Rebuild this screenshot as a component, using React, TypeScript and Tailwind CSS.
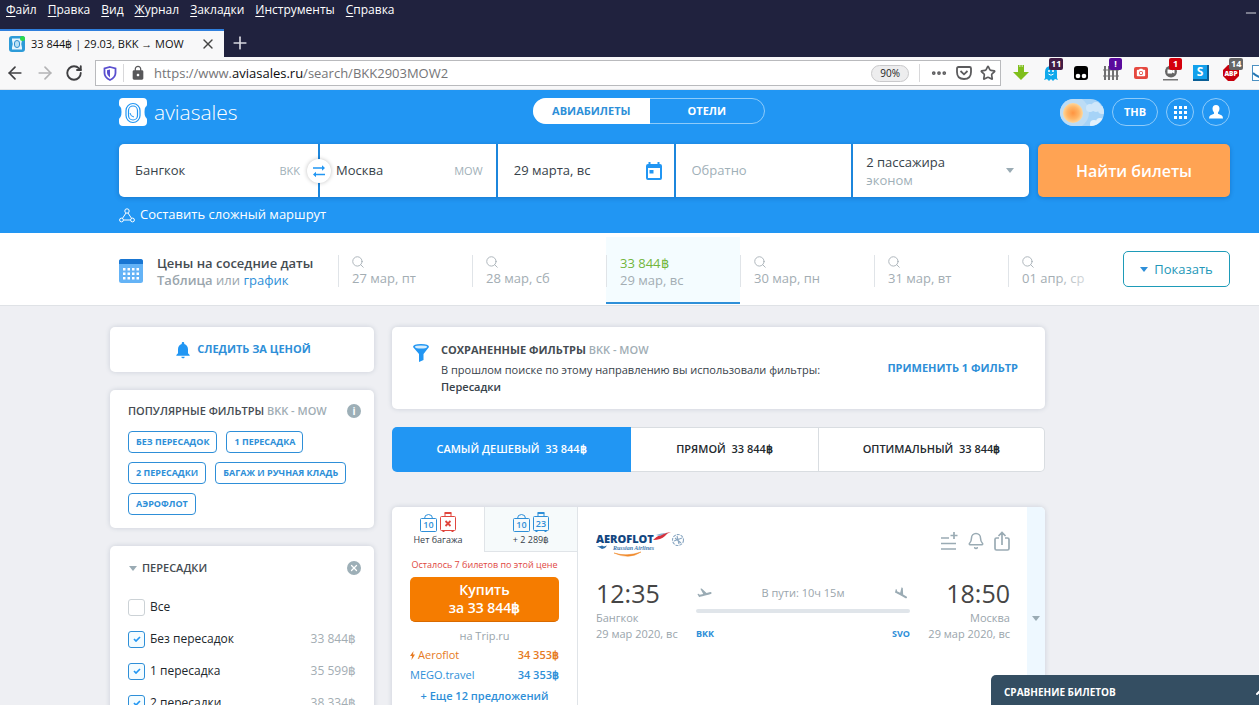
import React, { useState } from "react";
import clsx from "clsx";
import {
  ArrowLeft,
  ArrowRight,
  Bell,
  ChevronUp,
  Ellipsis,
  Minus,
  Plus,
  RotateCw,
  Search,
  Star,
  X,
} from "lucide-react";
import { MdCameraAlt, MdLock, MdNotifications } from "react-icons/md";

// DATA
const menuItems = ["Файл", "Правка", "Вид", "Журнал", "Закладки", "Инструменты", "Справка"];

const nearDates = [
  { label: "27 мар, пт" },
  { label: "28 мар, сб" },
  { label: "29 мар, вс", price: "33 844฿" },
  { label: "30 мар, пн" },
  { label: "31 мар, вт" },
  { label: "01 апр, ср" },
];

const popularFilters = [
  "БЕЗ ПЕРЕСАДОК",
  "1 ПЕРЕСАДКА",
  "2 ПЕРЕСАДКИ",
  "БАГАЖ И РУЧНАЯ КЛАДЬ",
  "АЭРОФЛОТ",
];

const stopOptions = [
  { id: "all", label: "Все", price: "", on: false },
  { id: "direct", label: "Без пересадок", price: "33 844฿", on: true },
  { id: "one", label: "1 пересадка", price: "35 599฿", on: true },
  { id: "two", label: "2 пересадки", price: "38 334฿", on: true },
];

const card = "bg-white rounded-[5px] shadow-[0_0_5px_rgba(60,80,110,0.2)]";

// ICONS
const Caret = ({ className }: { className?: string }) => (
  <svg viewBox="0 0 8 5" className={clsx("h-[5px] w-2 shrink-0 fill-current", className)}>
    <path d="M0 0h8L4 5z" />
  </svg>
);

const LogoMark = () => (
  <svg viewBox="0 0 28 28" className="size-7">
    <path
      fill="#fff"
      d="M4 0h20q4 0 4 4v2.500q0 1.500-1.500 2.500-1 1-1 5t1 5q1.500 1 1.500 2.500V24q0 4-4 4H4q-4 0-4-4v-2.500Q0 20 1.500 19q1-1 1-5t-1-5Q0 8 0 6.500V4q0-4 4-4z"
    />
    <rect x="7" y="5.500" width="14" height="19" rx="7" fill="none" stroke="#2196f3" strokeWidth="1.200" />
    <rect x="9.500" y="8" width="9" height="14" rx="4.500" fill="none" stroke="#2196f3" strokeWidth="1.200" />
    <path d="M11 15q.5 3.500 4 4" fill="none" stroke="#2196f3" />
  </svg>
);

const TabIcon = () => (
  <svg viewBox="0 0 16 16" className="size-4 shrink-0">
    <rect width="16" height="16" rx="3" fill="#2d9bd8" />
    <path d="M3 2.500h10v2q-1.500 3.500 0 7v2H3v-2q1.500-3.500 0-7z" fill="#e6f5fd" />
    <rect x="5.500" y="4.500" width="5" height="7" rx="2.500" fill="#b7e0f5" stroke="#2d8fd0" />
    <circle cx="13.500" cy="2.500" r="2.500" fill="#2bd94a" />
  </svg>
);

const Shield = () => (
  <svg viewBox="0 0 14 15" className="h-[15px] w-3.5 shrink-0">
    <path d="M7 1l5.500 1.500v4.500q0 4.500-5.500 7Q1.500 11.500 1.500 7V2.500z" fill="#fff" stroke="#5a4fcf" strokeWidth="1.800" />
    <path d="M7 3.500v8Q4 9.500 4 7V4.300z" fill="#5a4fcf" />
  </svg>
);

const Pocket = () => (
  <svg viewBox="0 0 16 16" className="size-4 shrink-0" fill="none" stroke="#5b5b5d" strokeWidth="1.800">
    <path d="M2.500 2h11q1.500 0 1.500 1.500V7q0 7-7 7T1 7V3.500Q1 2 2.500 2z" />
    <path d="M4.500 6L8 9.300 11.500 6" />
  </svg>
);

const Route = () => (
  <svg viewBox="0 0 16 15" className="h-[15px] w-4 shrink-0" fill="none" stroke="#fff">
    <circle cx="8" cy="3" r="2.200" />
    <circle cx="2.500" cy="12" r="1.900" />
    <circle cx="13.500" cy="12" r="1.900" />
    <path d="M7 5L3.500 10.300M9 5l3.500 5.300M4.500 12h7" />
  </svg>
);

const SwapArrows = () => (
  <svg viewBox="0 0 12 12" className="size-3" fill="none" stroke="#2196f3" strokeWidth="1.500">
    <path d="M0 3h10M12 9.500H2" />
    <path d="M9 .3L12 3 9 5.700zM3 6.800L0 9.500l3 2.700z" fill="#2196f3" stroke="none" />
  </svg>
);

const CalendarInput = () => (
  <svg viewBox="0 0 16 18" className="h-[18px] w-4 shrink-0">
    <path
      fill="#2196f3"
      fillRule="evenodd"
      d="M2.500 0h2v2h7V0h2v2h.5q2 0 2 2v12q0 2-2 2H2q-2 0-2-2V4q0-2 2-2h.5zM2 6v10h12V6z"
    />
    <path fill="#2196f3" d="M3.500 8h4v3.500h-4z" />
  </svg>
);

const CalendarTable = () => (
  <svg viewBox="0 0 24 24" className="size-6 shrink-0">
    <rect width="24" height="24" rx="2.500" fill="#64b3f6" />
    <path d="M0 5V2.500Q0 0 2.500 0h19Q24 0 24 2.500V5z" fill="#1976d2" />
    {[9, 13.500, 18].map((y) =>
      [4, 8.500, 13, 17.500].map((x) => (
        <rect key={`${x}-${y}`} x={x} y={y} width="2.500" height="2.500" fill="#fff" />
      ))
    )}
  </svg>
);

const Sun = () => (
  <svg viewBox="0 0 44 27" className="h-[27px] w-11">
    <defs>
      <radialGradient id="sun">
        <stop offset="0" stopColor="#ff9440" />
        <stop offset=".6" stopColor="#ffb566" />
        <stop offset="1" stopColor="#ffd79b" />
      </radialGradient>
      <clipPath id="sky">
        <rect width="44" height="27" rx="13.500" />
      </clipPath>
    </defs>
    <g clipPath="url(#sky)">
      <rect width="44" height="27" fill="#a6d3f7" />
      <circle cx="13" cy="13.500" r="16" fill="#bcdcf5" />
      <g fill="#cfe7fa">
        <circle cx="30" cy="9" r="4" />
        <circle cx="36" cy="8" r="5" />
        <circle cx="42" cy="11" r="4" />
        <circle cx="34" cy="25" r="4" fill="#e3f1fc" />
        <circle cx="40" cy="23" r="4" fill="#e3f1fc" />
      </g>
      <circle cx="13" cy="14" r="10" fill="url(#sun)" />
    </g>
  </svg>
);

const User = () => (
  <svg viewBox="0 0 14 14" className="size-3.5 fill-white">
    <path d="M7 0q3.500 0 3.500 3.800 0 2-1.500 3.700v1.300l3.500 1.500q1.500.7 1.500 3.200H0q0-2.500 1.500-3.200L5 8.800V7.500Q3.500 5.800 3.500 3.800 3.500 0 7 0z" />
  </svg>
);

const Grid9 = () => (
  <svg viewBox="0 0 13 13" className="size-[13px] fill-white">
    {[0, 5, 10].map((y) => [0, 5, 10].map((x) => <rect key={`${x}-${y}`} x={x} y={y} width="3" height="3" />))}
  </svg>
);

const Funnel = () => (
  <svg viewBox="0 0 16 18" className="h-[18px] w-4 shrink-0">
    <path d="M0 3q0-3 8-3t8 3L10.500 10v6L6 18v-8z" fill="#2196f3" />
    <ellipse cx="8" cy="3" rx="6.200" ry="1.600" fill="#d8eefd" />
  </svg>
);

const Bag = ({ value }: { value: string }) => (
  <svg viewBox="0 0 17 18" className="h-[18px] w-[17px]" fill="none" stroke="#2e8fd8">
    <path d="M1.500 4.500h14q1 0 1 1v11q0 1-1 1h-14q-1 0-1-1v-11q0-1 1-1zM4.500 4.500q0-4 4-4t4 4" />
    <text x="8.500" y="14" textAnchor="middle" fontSize="9" fontWeight="600" fill="#2e8fd8" stroke="none">
      {value}
    </text>
  </svg>
);

const Suitcase = ({ value }: { value?: string }) => (
  <svg viewBox="0 0 16 20" className="h-5 w-4" fill="none" stroke={value ? "#2e8fd8" : "#e0473f"}>
    <path d="M1.500 4.500h13q1 0 1 1v12q0 1-1 1h-13q-1 0-1-1v-12q0-1 1-1zM5 4.500v-3M11 4.500v-3" />
    <path d="M4.500 1h7M3.500 19v1M12.500 19v1" strokeWidth="2" />
    {value ? (
      <text x="8" y="15" textAnchor="middle" fontSize="9" fontWeight="600" fill="#2e8fd8" stroke="none">
        {value}
      </text>
    ) : (
      <path d="M5.500 9l5 5M10.500 9l-5 5" strokeWidth="1.800" />
    )}
  </svg>
);

const AeroflotLogo = () => (
  <svg viewBox="0 0 90 26" className="h-[26px] w-[90px]" role="img" aria-label="Aeroflot">
    <text x="0" y="12" fontSize="11" fontWeight="800" fill="#12467f">
      AEROFLOT
    </text>
    <text x="17" y="19" fontSize="6" fontStyle="italic" fontWeight="600" fill="#3f78ad" fontFamily="Liberation Serif, serif">
      Russian Airlines
    </text>
    <path d="M1 15q4 .5 5-.5l2 1 3-1-2 2.500-3 1z" fill="#2b6ca8" />
    <path d="M18 22q13 4 27-1-12 8-27 1z" fill="#f08a2c" stroke="#f08a2c" strokeWidth=".5" />
    <path d="M57 9q7-7 18-8-4 1-6 4-4 4-12 4z" fill="#d7303b" />
    <path d="M60 4q5-2 11-2-4 1-7 3z" fill="#8fb3d3" />
    <g fill="none" stroke="#8aa7c2" strokeWidth="1.100">
      <circle cx="82" cy="9" r="5.500" strokeDasharray="3 1" />
      <path d="M78 10l8-3M79 7l6 5M81 5l2 8" />
    </g>
  </svg>
);

const AddToList = () => (
  <svg viewBox="0 0 18 18" className="size-[18px]" fill="none" stroke="#9aabb4" strokeWidth="1.700">
    <path d="M1 6h8M1 11.500h15M1 17h15M14 0v7M10.500 3.500h7" />
  </svg>
);

const Share = () => (
  <svg viewBox="0 0 16 20" className="h-5 w-4" fill="none" stroke="#9aabb4" strokeWidth="1.700">
    <path d="M5 7H2.500Q1 7 1 8.500v9Q1 19 2.500 19h11q1.500 0 1.500-1.500v-9Q15 7 13.500 7H11M8 14V1.500M4.500 5L8 1.500 11.500 5" />
  </svg>
);

const PlaneUp = () => (
  <svg viewBox="0 0 24 20" className="h-3.5 w-[17px] fill-[#9aabb4]">
    <path d="M22.070 9.640c-.21-.8-1.040-1.280-1.840-1.060L14.920 10l-6.900-6.430-1.930.51 4.140 7.170-4.970 1.330-1.970-1.540-1.450.39 2.590 4.490s7.120-1.900 16.570-4.430c.81-.23 1.280-1.050 1.070-1.850z" />
  </svg>
);

const PlaneDown = () => (
  <svg viewBox="0 0 24 20" className="h-3.5 w-[17px] fill-[#9aabb4]">
    <path
      transform="rotate(14 12 10)"
      d="M9.680 13.270l4.350 1.160 5.310 1.420c.8.21 1.620-.26 1.840-1.060.21-.8-.26-1.620-1.060-1.840l-5.310-1.420-2.760-9.020L10.120 2v8.280L5.150 8.950l-.93-2.320-1.450-.39v5.170l1.600.43 5.310 1.430z"
    />
  </svg>
);

// BROWSER WINDOW
const Extension = ({ name, badge, badgeClass, children }: any) => (
  <button aria-label={name} className="relative flex size-[18px] shrink-0 items-center justify-center">
    {children}
    {badge && (
      <span
        className={clsx(
          "absolute -top-1.5 left-[7px] min-w-[13px] rounded-[2px] px-0.5 text-center text-[9px] leading-3 font-bold text-white",
          badgeClass
        )}
      >
        {badge}
      </span>
    )}
  </button>
);

const Extensions = () => (
  <div className="flex w-[258px] shrink-0 items-center gap-3 pl-[11px]">
    <Extension name="Загрузки">
      <svg viewBox="0 0 16 16" className="size-4">
        <path d="M5 2h6v5h5l-8 8-8-8h5z" fill="#80bf1c" />
        <path d="M5 0h1.500v3H5zM7.300 0h1.500v3H7.300zM9.500 0H11v3H9.500z" fill="#80bf1c" />
      </svg>
    </Extension>
    <Extension name="Ghostery" badge="11" badgeClass="bg-[#431c45]">
      <svg viewBox="0 0 14 16" className="h-4 w-3.5">
        <path d="M1 7q0-6 6-6t6 6v6l1 2-3-1-2 2-2-2-2 2-2-2-3 1 1-2z" fill="#0fa9ec" />
        <circle cx="5" cy="6" r="1" fill="#fff" />
        <circle cx="9" cy="6" r="1" fill="#fff" />
        <path d="M4.500 9Q7 11.500 9.500 9" fill="none" stroke="#fff" />
      </svg>
    </Extension>
    <Extension name="Tampermonkey">
      <svg viewBox="0 0 14 14" className="size-3.5">
        <rect width="14" height="14" rx="3" />
        <circle cx="4" cy="10" r="2.300" fill="#fff" />
        <circle cx="10" cy="10" r="2.300" fill="#fff" />
      </svg>
    </Extension>
    <Extension name="Забор" badge="!" badgeClass="bg-[#5a0a9c]">
      <svg viewBox="0 0 16 14" className="h-3.5 w-4" stroke="#707072" strokeWidth="2">
        <path d="M2 0v14M6 0v14M10 0v14M14 0v14" />
        <path d="M0 4h16M0 10h16" strokeWidth="1" />
      </svg>
    </Extension>
    <Extension name="Скриншот">
      <span className="flex h-3 w-3.5 items-center justify-center rounded-[2px] bg-[#e5483f]">
        <MdCameraAlt className="size-2.5 text-white" />
      </span>
    </Extension>
    <Extension name="Запись" badge="1" badgeClass="bg-[#d4000c]">
      <svg viewBox="0 0 16 16" className="size-4">
        <circle cx="8" cy="6.500" r="6" fill="#666" />
        <path d="M4.500 4.500h4.500v1l2.500-1v4l-2.500-1v1H4.500z" fill="#fff" />
        <path d="M0 14h15v1.500H0z" fill="#777" />
      </svg>
    </Extension>
    <Extension name="Stylus">
      <span className="flex size-4 items-center justify-center border-r-2 border-b-2 border-[#0b5f96] bg-[#12a0ec] text-xs leading-none font-bold text-white">
        S
      </span>
    </Extension>
    <Extension name="AdBlock" badge="14" badgeClass="bg-[#666]">
      <svg viewBox="0 0 16 16" className="size-4">
        <path d="M5 0h6l5 5v6l-5 5H5l-5-5V5z" fill="#c7000d" />
        <text x="8" y="11" textAnchor="middle" fontSize="6.500" fontWeight="800" fill="#fff">
          ABP
        </text>
      </svg>
    </Extension>
    <Extension name="Синхронизация">
      <svg viewBox="0 0 18 16" className="h-4 w-[18px]">
        <rect x=".5" y=".5" width="17" height="15" fill="#fff" stroke="#4a90c2" />
        <path d="M1 8q5 5 12 5" fill="none" stroke="#2778b5" strokeWidth="2" />
      </svg>
    </Extension>
  </div>
);

const BrowserBar = () => (
  <div>
    <div className="flex h-[29px] items-start gap-[11px] bg-[#20223e] pt-0.5 pl-1.5 text-xs leading-4 text-white">
      {menuItems.map((item) => (
        <button key={item}>
          <span className="underline underline-offset-2">{item[0]}</span>
          {item.slice(1)}
        </button>
      ))}
      <button aria-label="Свернуть" className="mt-[3px] ml-auto">
        <Minus className="size-4 text-[#d6d7df]" strokeWidth={1.5} />
      </button>
    </div>
    <div className="flex h-7 items-center bg-[#20223e]">
      <div className="flex h-full w-56 items-center border-t-2 border-[#2f7fdd] bg-[#f8f8f9] pr-2 pl-[9px] text-[11px]">
        <TabIcon />
        <span className="ml-1.5 flex-1 whitespace-nowrap text-[#111]">33 844฿ | 29.03, BKK → MOW</span>
        <button aria-label="Закрыть вкладку">
          <X className="size-4 text-[#444]" />
        </button>
      </div>
      <button aria-label="Новая вкладка" className="ml-1.5">
        <Plus className="size-5 text-[#d6d7df]" />
      </button>
    </div>
    <div className="flex h-[33px] items-center border-b border-[#e2e4e7] bg-[#f8f8f9]">
      <div className="flex w-[95px] shrink-0 items-center gap-2.5 pl-[5px]">
        <button aria-label="Назад">
          <ArrowLeft className="size-5 text-[#3f3f42]" />
        </button>
        <button aria-label="Вперёд">
          <ArrowRight className="size-5 text-[#b3b3b5]" />
        </button>
        <button aria-label="Обновить">
          <RotateCw className="size-[18px] text-[#3f3f42]" strokeWidth={2.5} />
        </button>
      </div>
      <div className="flex h-[26px] flex-1 items-center border border-[#b9babd] bg-white pr-1 pl-[7px]">
        <Shield />
        <span className="mx-1.5 h-[18px] w-px bg-[#d8d8da]" />
        <MdLock className="size-4 shrink-0 text-[#58585a]" />
        <span className="ml-2 flex-1 pt-0.5 text-[13px] whitespace-nowrap text-[#757577]">
          https://www.<span className="text-[#0c0c0d]">aviasales.ru</span>/search/BKK2903MOW2
        </span>
        <button className="h-[17px] rounded-full border border-[#c9c9cb] bg-[#ededee] px-2 text-[10px] leading-[15px] text-[#222]">
          90%
        </button>
        <span className="mx-2.5 h-[18px] w-px bg-[#d8d8da]" />
        <div className="flex items-center gap-2 text-[#5b5b5d]">
          <Ellipsis className="size-[18px]" strokeWidth={3} />
          <Pocket />
          <Star className="size-4" strokeWidth={2.5} />
        </div>
      </div>
      <Extensions />
    </div>
  </div>
);

// SEARCH HEADER
const Header = () => {
  const [from, setFrom] = useState("Бангкок");
  const [to, setTo] = useState("Москва");
  const [date, setDate] = useState("29 марта, вс");

  const swap = () => {
    setFrom(to);
    setTo(from);
  };

  return (
    <header className="bg-[#2196f3] pt-2 pr-[29px] pb-2 pl-[119px]">
      <div className="flex h-7 items-center justify-between">
        <a href="#" className="flex items-center gap-[7px] text-[21px] leading-7 font-light text-white">
          <LogoMark />
          aviasales
        </a>
        <nav className="flex h-[26px] w-[232px] self-start rounded-full border border-[#8ecbfa] text-[11px] leading-6 font-bold text-white">
          <a href="#avia" className="-my-px -ml-px w-[117px] rounded-l-full bg-white pt-px text-center text-[#2e8fd8]">
            АВИАБИЛЕТЫ
          </a>
          <a href="#hotels" className="flex-1 text-center">
            ОТЕЛИ
          </a>
        </nav>
        <div className="flex items-center gap-2">
          <button aria-label="Светлая тема">
            <Sun />
          </button>
          <button className="h-7 w-[46px] rounded-full border border-[#8ecbfa] text-[11px] font-bold text-white">
            THB
          </button>
          <button aria-label="Сервисы" className="flex size-7 items-center justify-center rounded-full border border-[#8ecbfa]">
            <Grid9 />
          </button>
          <button aria-label="Профиль" className="flex size-7 items-center justify-center rounded-full border border-[#8ecbfa]">
            <User />
          </button>
        </div>
      </div>

      <form className="mt-[18px] flex h-[53px] gap-[9px] text-[13px]">
        <div className="grid flex-1 grid-cols-[199px_1fr_1fr_1fr_1fr] gap-0.5 rounded-[5px] bg-[#1c86dc] text-[#37424a] shadow-[0_1px_5px_rgba(0,50,110,0.3)]">
          <label className="relative flex items-center rounded-l-[5px] bg-white px-4 pt-px">
            <input aria-label="Откуда" className="w-0 flex-1 outline-none" value={from} onChange={(e) => setFrom(e.target.value)} />
            <span className="pr-0.5 text-[11px] text-[#9fb0b8]">BKK</span>
            <button
              type="button"
              aria-label="Поменять местами"
              onClick={swap}
              className="absolute top-1/2 -right-[13px] z-10 flex size-6 -translate-y-1/2 items-center justify-center rounded-full bg-white shadow-[0_0_4px_rgba(0,0,0,0.25)]"
            >
              <SwapArrows />
            </button>
          </label>
          <label className="flex items-center bg-white pt-px pr-[13px] pl-4">
            <input aria-label="Куда" className="w-0 flex-1 outline-none" value={to} onChange={(e) => setTo(e.target.value)} />
            <span className="text-[11px] text-[#9fb0b8]">MOW</span>
          </label>
          <label className="flex items-center bg-white pt-px pr-3 pl-4">
            <input aria-label="Дата вылета" className="w-0 flex-1 outline-none" value={date} onChange={(e) => setDate(e.target.value)} />
            <CalendarInput />
          </label>
          <label className="flex items-center bg-white px-4 pt-px">
            <input aria-label="Дата возвращения" className="w-0 flex-1 outline-none placeholder:text-[#9fb0b8]" placeholder="Обратно" />
          </label>
          <button type="button" className="flex items-center justify-between rounded-r-[5px] bg-white pr-[15px] pl-[13px] text-left leading-[18px]">
            <span>
              2 пассажира
              <span className="block text-[#9fb0b8]">эконом</span>
            </span>
            <Caret className="text-[#9aabb4]" />
          </button>
        </div>
        <button
          type="button"
          className="w-48 rounded-[5px] bg-[#ffa353] text-base font-semibold text-white shadow-[0_1px_4px_rgba(0,50,110,0.3)]"
        >
          Найти билеты
        </button>
      </form>

      <a href="#multi" className="mt-2 flex h-5 w-fit items-center gap-[5px] text-[13px] text-white">
        <Route />
        Составить сложный маршрут
      </a>
    </header>
  );
};

const PriceCalendar = () => (
  <section className="flex h-[73px] border-b border-[#dfe2e6] bg-white pr-[29px] pl-[119px] text-[13px] leading-[17px]">
    <div className="flex w-[219px] shrink-0 items-center gap-3.5 pt-1">
      <CalendarTable />
      <div className="pt-px text-[#9aa5ac]">
        <h2 className="font-semibold text-[#454c52]">Цены на соседние даты</h2>
        <span className="font-semibold">Таблица</span> или{" "}
        <a href="#chart" className="text-[#2e8fd8]">
          график
        </a>
      </div>
    </div>
    <div className="relative mr-3 flex flex-1 overflow-hidden pt-1">
      {nearDates.map((day) => (
        <button
          key={day.label}
          className={clsx(
            "mb-px flex w-[134px] shrink-0 border-b-2 pt-[18px] text-left",
            day.price ? "border-[#2e8fd8] bg-[#f4fcff]" : "border-transparent"
          )}
        >
          <span className="flex h-8 flex-col border-l border-[#e0e4e8] pl-[13px] text-[#a3adb3]">
            {day.price ? (
              <span className="text-[#72b63c]">{day.price}</span>
            ) : (
              <Search className="mb-px -ml-0.5 size-4" strokeWidth={1.5} />
            )}
            <span>{day.label}</span>
          </span>
        </button>
      ))}
      <div className="absolute inset-y-0 right-0 w-14 bg-linear-to-r from-white/0 to-white" />
    </div>
    <button className="mt-[18px] flex h-9 w-[107px] shrink-0 items-center justify-center gap-1.5 rounded-[5px] border border-[#1e9bb8] text-[#2397b8]">
      <Caret className="text-[#2e8fd8]" />
      Показать
    </button>
  </section>
);

// SIDEBAR
const Sidebar = () => {
  const [stops, setStops] = useState(stopOptions);

  const toggle = (id: string) => setStops((prev) => prev.map((s) => (s.id === id ? { ...s, on: !s.on } : s)));

  return (
    <aside className="flex w-[264px] shrink-0 flex-col gap-[18px]">
      <button className={clsx(card, "flex h-[45px] items-center justify-center gap-1 text-[11px] font-bold text-[#2e8fd8]")}>
        <MdNotifications className="size-5 text-[#2196f3]" />
        СЛЕДИТЬ ЗА ЦЕНОЙ
      </button>

      <section className={clsx(card, "h-[138px] px-[18px] pt-3")}>
        <div className="-mr-[5px] flex h-[18px] items-center justify-between text-[11px] font-semibold">
          <h3 className="text-[#454c52]">
            ПОПУЛЯРНЫЕ ФИЛЬТРЫ <span className="text-[#9fadb4]">BKK - MOW</span>
          </h3>
          <span className="flex size-3.5 items-center justify-center rounded-full bg-[#9dafb7] text-[10px] font-bold text-white">
            i
          </span>
        </div>
        <div className="mt-[11px] flex flex-wrap gap-[9px]">
          {popularFilters.map((name) => (
            <button
              key={name}
              className="h-[22px] rounded-[4px] border border-[#2e8fd8] px-[7px] text-[9px] font-bold text-[#2e8fd8]"
            >
              {name}
            </button>
          ))}
        </div>
      </section>

      <section className={clsx(card, "px-[18px] pt-3 pb-4")}>
        <div className="-mr-[5px] flex h-5 items-center text-[11px] font-semibold text-[#454c52]">
          <Caret className="ml-px text-[#9aabb4]" />
          <h3 className="ml-[5px] flex-1">ПЕРЕСАДКИ</h3>
          <button aria-label="Сбросить" className="flex size-3.5 items-center justify-center rounded-full bg-[#9dafb7]">
            <X className="size-2.5 text-white" strokeWidth={3} />
          </button>
        </div>
        <div className="mt-[13px]">
          {stops.map((s) => (
            <label key={s.id} className="flex h-8 items-center text-xs text-[#20262b]">
              <span className="mr-[5px] grid size-[17px] place-items-center">
                <input
                  type="checkbox"
                  checked={s.on}
                  onChange={() => toggle(s.id)}
                  className="col-start-1 row-start-1 size-[17px] appearance-none rounded-[3px] border border-[#ccd2d6] bg-white checked:border-[#2e8fd8] checked:bg-[#f4fcff]"
                />
                {s.on && (
                  <svg viewBox="0 0 8 6" className="pointer-events-none col-start-1 row-start-1 h-1.5 w-2" fill="none" stroke="#2196f3" strokeWidth="1.700">
                    <path d="M1 3l2 2 4-4" />
                  </svg>
                )}
              </span>
              <span className="flex-1">{s.label}</span>
              <span className="text-[#a3adb3]">{s.price}</span>
            </label>
          ))}
        </div>
      </section>
    </aside>
  );
};

// RESULTS
const SavedFilters = () => (
  <section className={clsx(card, "flex h-[82px] items-start justify-between pt-3.5 pr-[27px] pl-[21px] text-[11px]")}>
    <div className="flex gap-3">
      <div className="pt-[3px]">
        <Funnel />
      </div>
      <div className="text-[#37424a]">
        <h3 className="mb-0.5 leading-[18px] font-bold text-[#454c52]">
          СОХРАНЕННЫЕ ФИЛЬТРЫ <span className="font-semibold text-[#9fadb4]">BKK - MOW</span>
        </h3>
        <p className="leading-[17px]">В прошлом поиске по этому направлению вы использовали фильтры:</p>
        <p className="leading-[17px] font-semibold">Пересадки</p>
      </div>
    </div>
    <button className="mt-[18px] text-[11px] leading-[18px] font-bold text-[#2e8fd8]">ПРИМЕНИТЬ 1 ФИЛЬТР</button>
  </section>
);

const SortTabs = () => (
  <div className="mt-[18px] flex h-[45px] rounded-[5px] text-[11px] font-semibold text-[#23292e]">
    <button className="w-[239px] rounded-l-[5px] bg-[#2196f3] text-white">САМЫЙ ДЕШЕВЫЙ&nbsp; 33 844฿</button>
    <button className="w-[188px] border-y border-r border-[#d9dde1] bg-white">ПРЯМОЙ&nbsp; 33 844฿</button>
    <button className="flex-1 rounded-r-[5px] border-y border-r border-[#d9dde1] bg-white">ОПТИМАЛЬНЫЙ&nbsp; 33 844฿</button>
  </div>
);

const Offer = ({ name, price, fast }: { name: string; price: string; fast?: boolean }) => (
  <a href="#offer" className={clsx("flex h-5 items-center px-[18px] text-[11px]", fast ? "text-[#e67a22]" : "text-[#2e8fd8]")}>
    {fast && (
      <svg viewBox="0 0 5 9" className="mr-[3px] h-[9px] w-[5px] fill-current">
        <path d="M3.500 0L0 5h2l-.5 4L5 3.500H3z" />
      </svg>
    )}
    <span className="flex-1">{name}</span>
    <span className="font-semibold">{price}</span>
  </a>
);

const Ticket = () => (
  <article className={clsx(card, "mt-[35px] flex h-[222px] overflow-hidden")}>
    <div className="w-[186px] shrink-0 border-r border-[#e0e4e8]">
      <div className="flex h-[45px] text-[9px] leading-[14px] text-[#37424a]">
        <button className="flex w-[92px] flex-col items-center pt-1">
          <span className="flex h-[21px] items-end gap-[3px]">
            <Bag value="10" />
            <Suitcase />
          </span>
          <span className="mt-px">Нет багажа</span>
        </button>
        <button className="flex flex-1 flex-col items-center border-b border-l border-[#e0e4e8] bg-[#f6fafb] pt-1">
          <span className="flex h-[21px] items-end gap-[3px]">
            <Bag value="10" />
            <Suitcase value="23" />
          </span>
          <span className="mt-px">+ 2 289฿</span>
        </button>
      </div>
      <p className="mt-[5px] text-center text-[9px] leading-4 whitespace-nowrap text-[#e0473f]">Осталось 7 билетов по этой цене</p>
      <button className="mx-[18px] mt-1 block h-[45px] w-[149px] rounded-[5px] border-b border-[#d96a00] bg-[#f57c00] text-sm leading-[18px] font-semibold text-white">
        Купить
        <br />
        за 33 844฿
      </button>
      <p className="mt-[5px] text-center text-[11px] leading-[18px] text-[#9aa5ac]">на Trip.ru</p>
      <Offer name="Aeroflot" price="34 353฿" fast />
      <Offer name="MEGO.travel" price="34 353฿" />
      <a href="#more" className="block text-center text-[11px] leading-[22px] font-semibold text-[#2e8fd8]">
        + Еще 12 предложений
      </a>
    </div>

    <div className="flex-1 pt-6 pr-[17px] pl-[18px]">
      <div className="flex items-start justify-between">
        <AeroflotLogo />
        <div className="flex h-5 items-center gap-[9px]">
          <button aria-label="Добавить к сравнению">
            <AddToList />
          </button>
          <button aria-label="Подписаться">
            <Bell className="size-[18px] text-[#9aabb4]" />
          </button>
          <button aria-label="Поделиться">
            <Share />
          </button>
        </div>
      </div>
      <div className="mt-5 flex justify-between gap-5 text-[11px] leading-4 text-[#9aa5ac]">
        <div className="w-20 whitespace-nowrap">
          <p className="mb-px text-[25px] leading-8 text-[#454545]">12:35</p>
          <p>Бангкок</p>
          <p>29 мар 2020, вс</p>
        </div>
        <div className="flex-1">
          <div className="flex h-8 items-center justify-between">
            <PlaneUp />
            <span>В пути: 10ч 15м</span>
            <PlaneDown />
          </div>
          <div className="h-1 rounded-full bg-[#e0e5ea]" />
          <div className="mt-[13px] flex justify-between text-[9px] font-bold text-[#2e8fd8]">
            <span>BKK</span>
            <span>SVO</span>
          </div>
        </div>
        <div className="flex w-20 flex-col items-end whitespace-nowrap">
          <p className="mb-px text-[25px] leading-8 text-[#454545]">18:50</p>
          <p>Москва</p>
          <p>29 мар 2020, вс</p>
        </div>
      </div>
    </div>

    <button aria-label="Подробнее" className="flex w-[18px] items-center justify-center bg-[#eef8ff]">
      <Caret className="text-[#9aabb4]" />
    </button>
  </article>
);

const App = () => {
  return (
    <div className="h-screen overflow-hidden bg-[#eeeff3] font-['Open_Sans','Noto_Sans',sans-serif]">
      <BrowserBar />
      <Header />
      <PriceCalendar />
      <main className="flex gap-[18px] pt-[21px] pr-[29px] pl-[110px]">
        <Sidebar />
        <div className="max-w-[653px] flex-1">
          <SavedFilters />
          <SortTabs />
          <Ticket />
        </div>
      </main>
      <button className="fixed right-0 bottom-0 flex h-[30px] w-[268px] items-center justify-between overflow-hidden rounded-tl-[5px] bg-[#344e62] pt-1 pl-[13px] text-[10px] font-bold text-white">
        СРАВНЕНИЕ БИЛЕТОВ
        <ChevronUp className="-mr-2.5 size-4 shrink-0" strokeWidth={3} />
      </button>
    </div>
  );
};

export default App;
